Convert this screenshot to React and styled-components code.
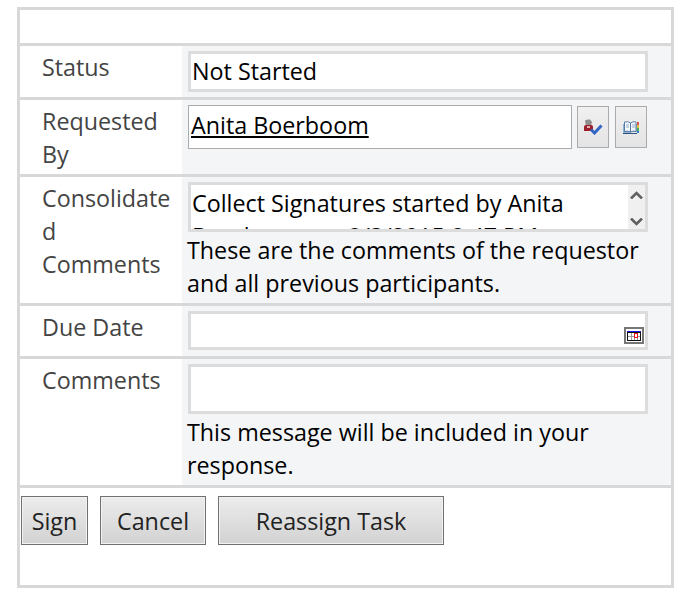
import styled, { createGlobalStyle } from "styled-components";

const GlobalStyle = createGlobalStyle`
  html, body {
    margin: 0;
    padding: 0;
    background: #fff;
    font-family: "Open Sans", "Noto Sans", sans-serif;
  }
`;

const Frame = styled.div`
  box-sizing: border-box;
  width: 657px;
  height: 581px;
  margin: 7px 0 0 17px;
  border: 3px solid #d8d8d8;
`;

const TopBar = styled.div`
  height: 33px;
  border-bottom: 3px solid #d8d8d8;
`;

const Row = styled.div`
  display: grid;
  grid-template-columns: 162px 1fr;
  height: ${({ $height }) => $height}px;
  border-bottom: 3px solid #d8d8d8;
`;

const Label = styled.div`
  padding: 5px 8px 0 22px;
  font-size: 23.3px;
  line-height: 33px;
  color: #444;
  overflow-wrap: anywhere;
`;

const Value = styled.div`
  background: #f4f5f7;
  padding: 5px 23px 0 6px;
  font-size: 23.3px;
  line-height: 33px;
  color: #000;
  overflow: hidden;
`;

const ThickField = styled.div`
  box-sizing: border-box;
  height: ${({ $height }) => $height}px;
  border: 3px solid #dcdcdc;
  background: #fff;
  padding: 0 1px;
  display: flex;
  align-items: center;
  justify-content: space-between;
`;

const PickerRow = styled.div`
  display: flex;
  align-items: flex-start;
  gap: 5px;
  margin-right: 1px;
`;

const PersonField = styled.div`
  box-sizing: border-box;
  flex: 1;
  height: 44px;
  border: 1px solid #ababab;
  background: #fff;
  padding: 3px 2px;
`;

const PersonName = styled.span`
  text-decoration: underline;
`;

const IconButton = styled.button`
  box-sizing: border-box;
  width: 32px;
  height: 42px;
  margin-top: 1px;
  padding: 0;
  border: 1px solid #ababab;
  background: linear-gradient(#f0f0f0, #e4e4e4);
  display: flex;
  align-items: center;
  justify-content: center;

  & + & {
    margin-left: 1px;
  }
`;

const ScrollBox = styled.div`
  box-sizing: border-box;
  position: relative;
  height: 50px;
  border: 3px solid #dcdcdc;
  background: #fff;
  padding: 2px 22px 0 1px;
  overflow: hidden;
`;

const ScrollTrack = styled.div`
  position: absolute;
  top: 0;
  right: 0;
  bottom: 0;
  width: 17px;
  background: #f0f0f0;
  display: flex;
  flex-direction: column;
  align-items: center;
  justify-content: space-between;
  padding: 6px 0 3px;
  box-sizing: border-box;
`;

const Hint = styled.div`
  margin: 2px 0 0 -1px;
`;

const CalendarSlot = styled.span`
  display: flex;
  margin-top: 9px;
`;

const Buttons = styled.div`
  display: flex;
  gap: 12px;
  padding: 8px 0 0 1px;
`;

const ActionButton = styled.button`
  box-sizing: border-box;
  width: ${({ $width }) => $width}px;
  height: 49px;
  padding: 0;
  border: 1px solid #707070;
  box-shadow: inset 0 0 0 1px #f2f2f2;
  background: linear-gradient(#ececec, #d2d2d2);
  font-family: inherit;
  font-size: 23.3px;
  color: #222;
`;

const Chevron = ({ up }) => (
  <svg width="13" height="8" viewBox="0 0 13 8">
    <path
      d={up ? "M1 7.5 L6.5 2 L12 7.5" : "M1 .5 L6.5 6 L12 .5"}
      fill="none"
      stroke="#606060"
      strokeWidth="2.6"
    />
  </svg>
);

const PersonCheckIcon = () => (
  <svg width="20" height="16" viewBox="0 0 20 16">
    <path d="M2 1.5 Q4 0 7 .5 L9 3 L8 7 H3 Z" fill="#8f8f8f" />
    <path d="M1 12 V7.5 Q1 6 3 6 H8 Q10 6 10 8 V12 Z" fill="#9c1f2c" />
    <rect x="4" y="7" width="3" height="2" fill="#e6b0b4" />
    <path d="M8 10.5 L11.5 14 L18.5 6.5" fill="none" stroke="#3266c4" strokeWidth="3" />
  </svg>
);

const BookIcon = () => (
  <svg width="16" height="13" viewBox="0 0 16 13">
    <path d="M0 3 V12 H7.5 V11 H14 V3 Z" fill="#8fb0d4" />
    <path d="M1.5 1 Q5 0 7.5 2 V11 Q5 9.5 1.5 10.5 Z" fill="#f4f8fc" stroke="#4a6f9c" strokeWidth=".9" />
    <path d="M13 1 Q10 0 7.5 2 V11 Q10 9.5 13 10.5 Z" fill="#f4f8fc" stroke="#4a6f9c" strokeWidth=".9" />
    <path d="M3 4 H6 M3 6 H6 M9 4 H12 M9 6 H12" stroke="#7f9cc0" strokeWidth=".8" />
    <path d="M0 12.5 H14" stroke="#2f5380" />
    <rect x="14" y="1" width="2" height="3" fill="#d9534f" />
    <rect x="14" y="4" width="2" height="3" fill="#e8c33c" />
    <rect x="14" y="7" width="2" height="3" fill="#4fae5c" />
    <rect x="14" y="10" width="2" height="2" fill="#3a7fd0" />
  </svg>
);

const CalendarIcon = () => (
  <svg width="20" height="17" viewBox="0 0 20 17" shapeRendering="crispEdges">
    <rect x="1" y="1" width="18" height="15" fill="#fff" stroke="#777" strokeWidth="2" />
    <rect x="3" y="4" width="14" height="10" fill="#111" />
    <rect x="4" y="6" width="12" height="7" fill="#fff" />
    <rect x="3" y="4" width="14" height="1" fill="#1414e6" />
    <path d="M4 9 H16 M7 6 V13 M10 6 V13 M13 6 V13" stroke="#999" />
    <rect x="10" y="6" width="4" height="5" fill="#e81010" />
    <rect x="11" y="7" width="2" height="3" fill="#fff" />
  </svg>
);

export default function App() {
  return (
    <>
      <GlobalStyle />
      <Frame>
        <TopBar />
        <Row $height={51}>
          <Label>Status</Label>
          <Value>
            <ThickField $height={41}>Not Started</ThickField>
          </Value>
        </Row>
        <Row $height={74}>
          <Label>Requested By</Label>
          <Value>
            <PickerRow>
              <PersonField>
                <PersonName>Anita Boerboom</PersonName>
              </PersonField>
              <IconButton>
                <PersonCheckIcon />
              </IconButton>
              <IconButton>
                <BookIcon />
              </IconButton>
            </PickerRow>
          </Value>
        </Row>
        <Row $height={126}>
          <Label>Consolidated Comments</Label>
          <Value>
            <ScrollBox>
              Collect Signatures started by Anita Boerboom on 8/3/2015 8:47 PM
              <ScrollTrack>
                <Chevron up />
                <Chevron />
              </ScrollTrack>
            </ScrollBox>
            <Hint>These are the comments of the requestor and all previous participants.</Hint>
          </Value>
        </Row>
        <Row $height={50}>
          <Label>Due Date</Label>
          <Value>
            <ThickField $height={39}>
              <span />
              <CalendarSlot>
                <CalendarIcon />
              </CalendarSlot>
            </ThickField>
          </Value>
        </Row>
        <Row $height={126}>
          <Label>Comments</Label>
          <Value>
            <ThickField $height={50} />
            <Hint>This message will be included in your response.</Hint>
          </Value>
        </Row>
        <Buttons>
          <ActionButton $width={67}>Sign</ActionButton>
          <ActionButton $width={106}>Cancel</ActionButton>
          <ActionButton $width={226}>Reassign Task</ActionButton>
        </Buttons>
      </Frame>
    </>
  );
}
